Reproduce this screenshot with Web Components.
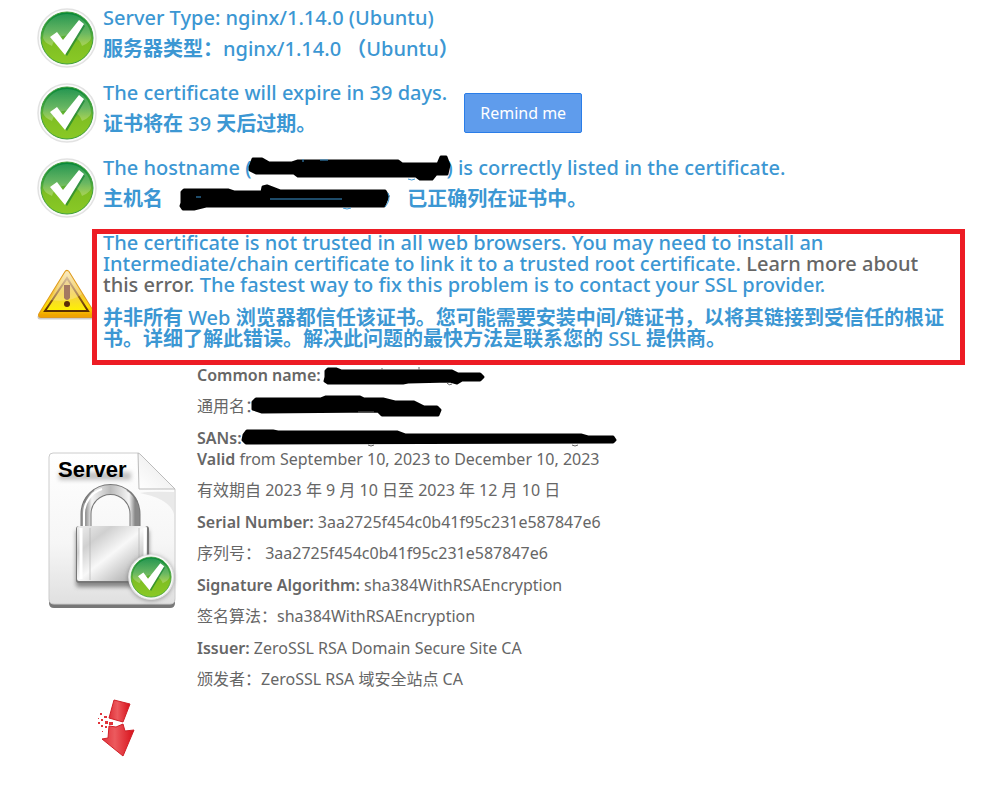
<!DOCTYPE html>
<html lang="en">
<head>
<meta charset="utf-8">
<title>SSL certificate check</title>
<style>
body{margin:0;background:#fff;color:#666;font:16px/21px "Noto Sans","Noto Sans CJK SC",sans-serif}
</style>
</head>
<body>
<ssl-report></ssl-report>
<script>
const define = (name, html, init) => {
  const t = document.createElement('template');
  t.innerHTML = html;
  customElements.define(name, class extends HTMLElement {
    constructor() {
      super();
      this.attachShadow({mode: 'open'}).append(t.content.cloneNode(true));
    }
    connectedCallback() { if (init) init(this, this.shadowRoot); }
  });
};

const tick = `
<defs>
<linearGradient id="g" x1="0" y1="0" x2="0" y2="1"><stop offset="0" stop-color="#04863a"/><stop offset=".4" stop-color="#43a53c"/><stop offset=".6" stop-color="#7fbf22"/><stop offset="1" stop-color="#8ac926"/></linearGradient>
<linearGradient id="h" x1="0" y1="0" x2="0" y2="1"><stop offset="0" stop-color="#fff" stop-opacity=".12"/><stop offset="1" stop-color="#fff" stop-opacity=".25"/></linearGradient>
</defs>
<circle cx="30" cy="30" r="29" fill="#fbfbfb" stroke="#e2e2e2" stroke-width="1.5"/>
<circle cx="30" cy="30" r="26" fill="url(#g)" stroke="#3f9f3a"/>
<path d="M6 30a24 24 0 0 1 48 0c-1 4-5 6-9 8-3-13-26-15-30 0-5-2-8-5-9-8z" fill="url(#h)"/>
<path d="M15 31l5-5 6 8 17-20 5 4-18 30z" fill="#0c7a30" opacity=".6"/>
<path d="M13 29l7-5 6 8 16-20 5 4-19 31z" fill="#fff"/>`;

define('ok-icon', `<style>:host{display:block;flex:none;width:60px;height:60px}svg{display:block}</style>
<svg width="60" height="60" viewBox="0 0 60 60" aria-hidden="true">${tick}</svg>`);

define('warning-icon', `<style>:host{display:block;flex:none;width:60px;height:60px}svg{display:block}</style>
<svg width="60" height="60" viewBox="0 0 60 60" aria-hidden="true">
<defs><linearGradient id="a" x1="0" y1="0" x2="0" y2="1"><stop offset="0" stop-color="#f6e2a8"/><stop offset=".5" stop-color="#f2c53c"/><stop offset=".8" stop-color="#ffdf00"/><stop offset="1" stop-color="#f0a400"/></linearGradient>
<linearGradient id="b" x1="0" y1="0" x2="0" y2="1"><stop offset="0" stop-color="#e8c98a"/><stop offset=".5" stop-color="#f3cf42"/><stop offset="1" stop-color="#fff200"/></linearGradient>
<linearGradient id="c" x1="0" y1="0" x2="0" y2="1"><stop offset="0" stop-color="#c9a679"/><stop offset=".6" stop-color="#8a5a18"/><stop offset="1" stop-color="#5a2e00"/></linearGradient></defs>
<path d="M30 12L57 56H3z" fill="#999" stroke="#aaa" stroke-width="5" stroke-linejoin="round" opacity=".6"/>
<path d="M30 12L56 54H4z" fill="url(#a)" stroke="#e09a1c" stroke-width="6" stroke-linejoin="round"/>
<path d="M30 12L56 54H4z" fill="url(#a)" stroke="url(#a)" stroke-width="4" stroke-linejoin="round"/>
<path d="M30 17L51 50H8z" fill="url(#b)" stroke="url(#c)" stroke-width="2"/>
<path d="M27 24h6v13q-3 4-6 0z" fill="#8b5236"/><circle cx="30" cy="43" r="3" fill="#5c2c08"/>
<path d="M28 12q2-3 4 0l13 21Q34 42 13 39z" fill="#fff" opacity=".22"/></svg>`);

define('server-icon', `<style>:host{display:block;flex:none;width:130px;height:160px}svg{display:block}text{font:bold 22px "Liberation Sans",Arial,sans-serif}</style>
<svg width="130" height="160" viewBox="0 0 130 160">
<defs>
<linearGradient id="p" x1="0" y1="0" x2="0" y2="1"><stop offset="0" stop-color="#fff"/><stop offset=".6" stop-color="#f6f6f6"/><stop offset="1" stop-color="#e0e0e0"/></linearGradient>
<linearGradient id="f" x1="0" y1="1" x2="1" y2="0"><stop offset="0" stop-color="#fff"/><stop offset=".5" stop-color="#f3f3f3"/><stop offset="1" stop-color="#bbb"/></linearGradient>
<linearGradient id="m" x1="0" y1="0" x2="1" y2="1"><stop offset="0" stop-color="#eee"/><stop offset=".25" stop-color="#d0d0d0"/><stop offset=".5" stop-color="#f8f8f8"/><stop offset="1" stop-color="#999"/></linearGradient>
<linearGradient id="s" x1="0" y1="0" x2="1" y2="0"><stop offset="0" stop-color="#999"/><stop offset=".12" stop-color="#f4f4f4"/><stop offset=".5" stop-color="#bbb"/><stop offset=".88" stop-color="#f4f4f4"/><stop offset="1" stop-color="#888"/></linearGradient>
<filter id="d" x="-20%" y="-60%" width="140%" height="220%"><feGaussianBlur stdDeviation="2"/></filter></defs>
<path d="M4 6h86l37 37v110q0 5-5 5H6q-5 0-5-5V9q0-3 3-3z" fill="#777"/>
<path d="M5 3h85l37 36v110q0 5-5 5H6q-5 0-5-5V7q0-4 4-4z" fill="url(#p)" stroke="#ccc"/>
<path d="M92 43q8-2 34-1v22q-4-15-34-21z" fill="#ddd" opacity=".6"/>
<path d="M90 3q1 0 3 2l34 34H91z" fill="url(#f)" stroke="#bbb"/>
<path d="M11 22h72v8H11z" fill="#888" opacity=".5" filter="url(#d)"/>
<text x="10" y="27" fill="#000">Server</text>
<rect x="28" y="80" width="73" height="57" rx="3" fill="#444" opacity=".6" filter="url(#d)"/>
<path d="M38 80V64a24 24 0 0 1 49 0v16" fill="none" stroke="#777" stroke-width="11"/>
<path d="M38 80V64a24 24 0 0 1 49 0v16" fill="none" stroke="url(#s)" stroke-width="9"/>
<path d="M36 78V63a27 26 0 0 1 18-24" fill="none" stroke="#fff" stroke-width="2"/>
<path d="M36 53q3-8 10-13M79 40q7 4 10 12" fill="none" stroke="#777" stroke-width="2" opacity=".7"/>
<rect x="28" y="76" width="73" height="57" rx="3" fill="#777"/>
<rect x="29" y="76" width="70" height="55" rx="2" fill="url(#m)"/>
<path d="M33 78v51M97 78v50" stroke="#fff" stroke-width="3"/><path d="M42 78v52M91 78v50" stroke="#aaa" opacity=".6"/>
<circle cx="103" cy="128" r="23" fill="#555" opacity=".5" filter="url(#d)"/>
<circle cx="103" cy="127" r="22" fill="#fff"/>
<g transform="translate(80 104) scale(.77)">${tick}</g></svg>`);

define('broken-arrow', `<style>:host{display:block;padding-left:98px}svg{display:block}</style>
<svg width="38" height="60" viewBox="98 697 38 60" aria-hidden="true">
<defs><linearGradient id="r" x1="0" y1="0" x2="1" y2="0"><stop offset="0" stop-color="#e03038"/><stop offset=".4" stop-color="#ec5a5e"/><stop offset="1" stop-color="#d8101a"/></linearGradient></defs>
<path d="M114 699l16 4-7 18-14-4z" fill="url(#r)" stroke="#cf1f27"/>
<path d="M109 725l7 1 7-3 2 7 9-1-11 26-21-17 6-1z" fill="url(#r)" stroke="#cf1f27"/>
<path d="M109 721h4v3h-4zM105 720h3v3h-3zM104 715h3v2h-3zM100 712h2v2h-2zM98 721h2v2h-2zM101 718h2v2h-2zM101 724h2v2h-2zM105 725h2v2h-2zM102 730h1v1h-1zM98 717h1v1h-1z" fill="#e0343b"/></svg>`);

define('ink-mark', `<style>:host{display:inline-block;height:21px;vertical-align:top}svg{display:block;overflow:visible;position:relative}path{fill:#000;stroke:#000;stroke-width:3;stroke-linejoin:round}.bits{fill:none;stroke:currentColor;stroke-width:1}</style>
<svg aria-hidden="true"><path class="ink"/><path class="bits"/></svg>`, (el, root) => {
  const [x, y, w] = el.getAttribute('box').split(' ').map(Number);
  const svg = root.querySelector('svg');
  svg.setAttribute('viewBox', `${x} ${y} ${w} 21`);
  svg.setAttribute('width', w);
  svg.setAttribute('height', 21);
  root.querySelector('.ink').setAttribute('d', el.getAttribute('shape'));
  root.querySelector('.bits').setAttribute('d', el.getAttribute('bits'));
});

define('check-row', `<style>
:host{display:flex;align-items:flex-start;gap:6px;color:#3c97d3;font-size:20px;font-weight:500}
:host([flagged]){align-items:center}
.text{display:grid;gap:10px;position:relative}
.action{margin:11px 0 0 11px}
::slotted(p){margin:0}
::slotted(ok-icon){margin-top:1px}
:host([flagged]) .text{gap:12px}
:host([flagged]) .text::after{content:"";position:absolute;inset:-3px -9px -16px -11px;border:5px solid #ed1c24;pointer-events:none}
</style><slot name="icon"></slot><div class="text"><slot></slot></div><div class="action"><slot name="action"></slot></div>`,
(el, root) => { if (!el.querySelector('[slot=action]')) root.querySelector('.action').remove(); });

define('remind-button', `<style>:host{display:block}button{font:16px/22px "Noto Sans",sans-serif;color:#fff;background:#5f9cec;border:1px solid #2a7de8;border-radius:2px;padding:8px 15px;display:block}</style><button type="button"><slot></slot></button>`);

define('detail-pair', `<style>:host{display:grid;gap:10px}::slotted(p){margin:0}</style><slot></slot>`);

define('ssl-report', `<style>
:host{display:block;padding:7px 40px 8px 37px}
main{display:grid;gap:14px}
b{font-weight:700}
strong{font-weight:600}
a{color:#666;text-decoration:none}
.details{display:flex;align-items:center;gap:19px;padding:2px 0 0 11px}
.list{display:grid;gap:11px}
.tight{display:grid}
server-icon{margin-top:4px}
broken-arrow{margin:-6px 0 0 -37px}
</style>
<main>
<check-row><ok-icon slot="icon"></ok-icon><p>Server Type: nginx/1.14.0 (Ubuntu)</p><p lang="zh-CN"><b>服务器类型：</b>nginx/1.14.0 <b>（</b>Ubuntu<b>）</b></p></check-row>
<check-row><ok-icon slot="icon"></ok-icon><p>The certificate will expire in 39 days.</p><p lang="zh-CN"><b>证书将在</b> 39 <b>天后过期。</b></p><remind-button slot="action">Remind me</remind-button></check-row>
<check-row><ok-icon slot="icon"></ok-icon><p>The hostname (<ink-mark box="251 157 195" bits="M303 159v3M320 160h8M408 179q4 2 7 0" shape="M250 167L253 159H262L269 163H292L298 161H398L402 164H438L441 157H446L449 165L447 174H436L432 179H420L416 176H298L294 173H256L250 170z"></ink-mark>) is correctly listed in the certificate.</p><p lang="zh-CN"><b>主机名</b> <ink-mark box="168 189 239" bits="M270 200h72M343 209q4 2 8 0M388 194q3 7-3 14M196 198h5" shape="M182 193L184 191H228L234 193H262L263 188L267 187L280 192H385L388 197L384 207H206L194 210H183L181 207L182 204z"></ink-mark><b>已正确列在证书中。</b></p></check-row>
<check-row flagged><warning-icon slot="icon"></warning-icon><p>The certificate is not trusted in all web browsers. You may need to install an Intermediate/chain certificate to link it to a trusted root certificate. <a href="#error">Learn more about this error</a>. The fastest way to fix this problem is to contact your SSL provider.</p><p lang="zh-CN"><b>并非所有</b> Web <b>浏览器都信任该证书。您可能需要安装中间/链证书，以将其链接到受信任的根证书。详细了解此错误。解决此问题的最快方法是联系您的</b> SSL <b>提供商。</b></p></check-row>
<div class="details"><server-icon></server-icon><div class="list">
<detail-pair><p><strong>Common name:</strong> <ink-mark box="325 364 160" bits="M447 382q2 3 5 1M382 367v2M419 366v3" shape="M326 370L328 368H336L341 370H452L458 373H480L483 376L480 379H462L457 382L450 380L408 381L403 382H328L325 380L326 376z"></ink-mark></p><p lang="zh-CN">通用名：<ink-mark box="261 396 180" bits="M358 412h16" shape="M253 402L256 399H321L326 397H360L364 399H383L395 402H414L424 407H437L440 410L438 415H382L378 411L262 412L253 409z"></ink-mark></p></detail-pair>
<div class="tight"><div><strong>SANs:</strong><ink-mark box="241 427 374" bits="M367 444q3 2 6 0M571 444q3 2 6 0" shape="M243 434L246 430H272L277 431H396L404 434H580L587 436H612L614 439L612 441L245 442L242 439z"></ink-mark></div>
<detail-pair><p><strong>Valid</strong> from September 10, 2023 to December 10, 2023</p><p lang="zh-CN">有效期自 2023 年 9 月 10 日至 2023 年 12 月 10 日</p></detail-pair></div>
<detail-pair><p><strong>Serial Number:</strong> 3aa2725f454c0b41f95c231e587847e6</p><p lang="zh-CN">序列号： 3aa2725f454c0b41f95c231e587847e6</p></detail-pair>
<detail-pair><p><strong>Signature Algorithm:</strong> sha384WithRSAEncryption</p><p lang="zh-CN">签名算法：sha384WithRSAEncryption</p></detail-pair>
<detail-pair><p><strong>Issuer:</strong> ZeroSSL RSA Domain Secure Site CA</p><p lang="zh-CN">颁发者：ZeroSSL RSA 域安全站点 CA</p></detail-pair>
</div></div>
<broken-arrow></broken-arrow>
</main>`);
</script>
</body>
</html>
